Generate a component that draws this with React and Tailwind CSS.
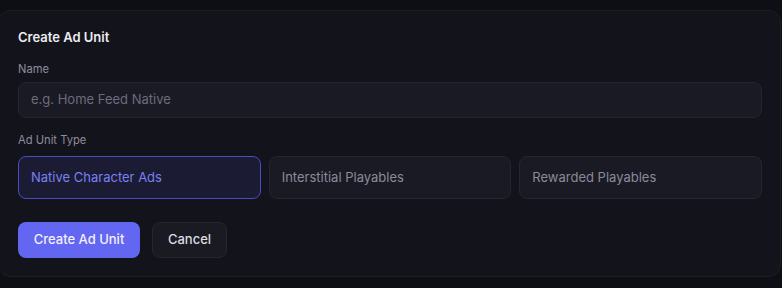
export default function App() {
  const opts = ["Native Character Ads", "Interstitial Playables", "Rewarded Playables"];
  return (
    <div className="w-[782px] h-[288px] overflow-hidden bg-[#0e0e15] pt-[10px]" style={{ fontFamily: "Inter, 'Noto Sans', sans-serif" }}>
      <div className="ml-[-2px] w-[783px] rounded-xl border border-[#1c1c26] bg-[#13131b] pl-[19px] pr-[18px] pt-[16px] pb-[18px]">
        <div className="text-[13px] leading-5 font-semibold text-[#ececf1]">Create Ad Unit</div>
        <div className="mt-[14px] text-[11.2px] leading-4 text-[#8d8d9b]">Name</div>
        <div className="mt-[5px] h-[36px] rounded-lg border border-[#252531] bg-[#1a1a24] flex items-center px-3 text-[13px] text-[#6c6c7c]">
          e.g. Home Feed Native
        </div>
        <div className="mt-[14px] text-[11.2px] leading-4 text-[#8d8d9b]">Ad Unit Type</div>
        <div className="mt-[8px] grid grid-cols-3 gap-2">
          {opts.map((o, i) => (
            <div
              key={o}
              className={
                i === 0
                  ? "h-[43px] rounded-lg border border-[#4b4bc4] bg-[#1b1c33] flex items-center px-3 text-[13px] text-[#7b7ff2]"
                  : "h-[43px] rounded-lg border border-[#252531] bg-[#1a1a24] flex items-center px-3 text-[13px] text-[#8a8a99]"
              }
            >
              {o}
            </div>
          ))}
        </div>
        <div className="mt-[23px] flex gap-3">
          <div className="h-[36px] w-[122px] rounded-lg bg-[#6366f1] flex items-center justify-center text-[13px] font-medium text-[#f0f0ff]">
            Create Ad Unit
          </div>
          <div className="h-[36px] w-[75px] rounded-lg border border-[#262631] bg-[#1a1a22] flex items-center justify-center text-[13px] font-medium text-[#dcdce4]">
            Cancel
          </div>
        </div>
      </div>
    </div>
  );
}
